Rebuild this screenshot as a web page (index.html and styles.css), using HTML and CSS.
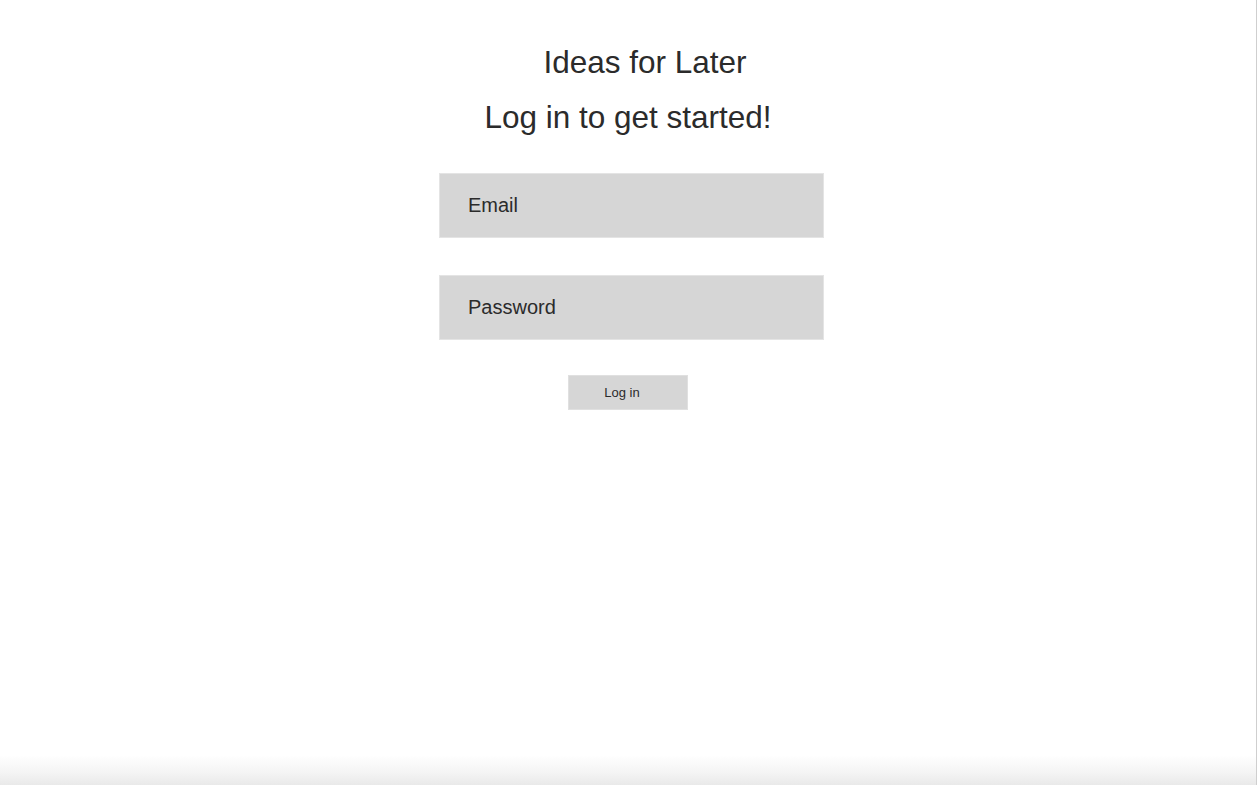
FILE: index.html
```html
<!DOCTYPE html>
<html>
<head>
<meta charset="utf-8">
<link rel="stylesheet" href="styles.css">
<title>Ideas for Later</title>
</head>
<body>
<div class="window">
  <main class="page">
    <h1 class="title">Ideas for Later</h1>
    <h2 class="subtitle">Log in to get started!</h2>
    <form class="login">
      <input class="field" type="email" placeholder="Email">
      <input class="field" type="password" placeholder="Password">
      <button class="btn" type="button">Log in</button>
    </form>
  </main>
  <div class="shade"></div>
</div>
</body>
</html>
```
FILE: styles.css
```css
html, body {
  margin: 0;
  padding: 0;
  background: #fff;
}
body {
  font-family: "Liberation Sans", Arial, sans-serif;
  color: #2b2b2b;
}
.window {
  width: 1257px;
  height: 785px;
  display: flex;
  flex-direction: column;
  overflow: hidden;
  border-right: 1px solid #cfcfcf;
  box-sizing: border-box;
}
.page {
  flex: 1;
  display: flex;
  flex-direction: column;
  align-items: center;
  padding-top: 44px;
  box-sizing: border-box;
}
.title {
  margin: 0;
  font-size: 31.5px;
  font-weight: normal;
  line-height: 37px;
  padding-left: 34px;
}
.subtitle {
  margin: 18px 0 0;
  font-size: 31.5px;
  font-weight: normal;
  line-height: 37px;
}
.login {
  margin-top: 37px;
  display: flex;
  flex-direction: column;
  align-items: center;
}
.field {
  box-sizing: border-box;
  width: 385px;
  height: 65px;
  margin-left: 7px;
  border: 1px solid #e4e4e4;
  background: #d6d6d6;
  padding: 0 28px;
  font-family: "Liberation Sans", Arial, sans-serif;
  font-size: 20px;
  color: #2b2b2b;
  outline: none;
}
.field + .field {
  margin-top: 37px;
}
.field::placeholder {
  color: #2b2b2b;
  opacity: 1;
}
.btn {
  margin-top: 35px;
  width: 120px;
  height: 35px;
  border: 1px solid #e0e0e0;
  background: #d6d6d6;
  font-family: "Liberation Sans", Arial, sans-serif;
  font-size: 13px;
  color: #2b2b2b;
  padding: 0;
  text-indent: -12px;
  cursor: pointer;
}
.shade {
  height: 30px;
  background: linear-gradient(to bottom, #ffffff 0%, #f4f4f4 60%, #e9e9e9 100%);
}
```
